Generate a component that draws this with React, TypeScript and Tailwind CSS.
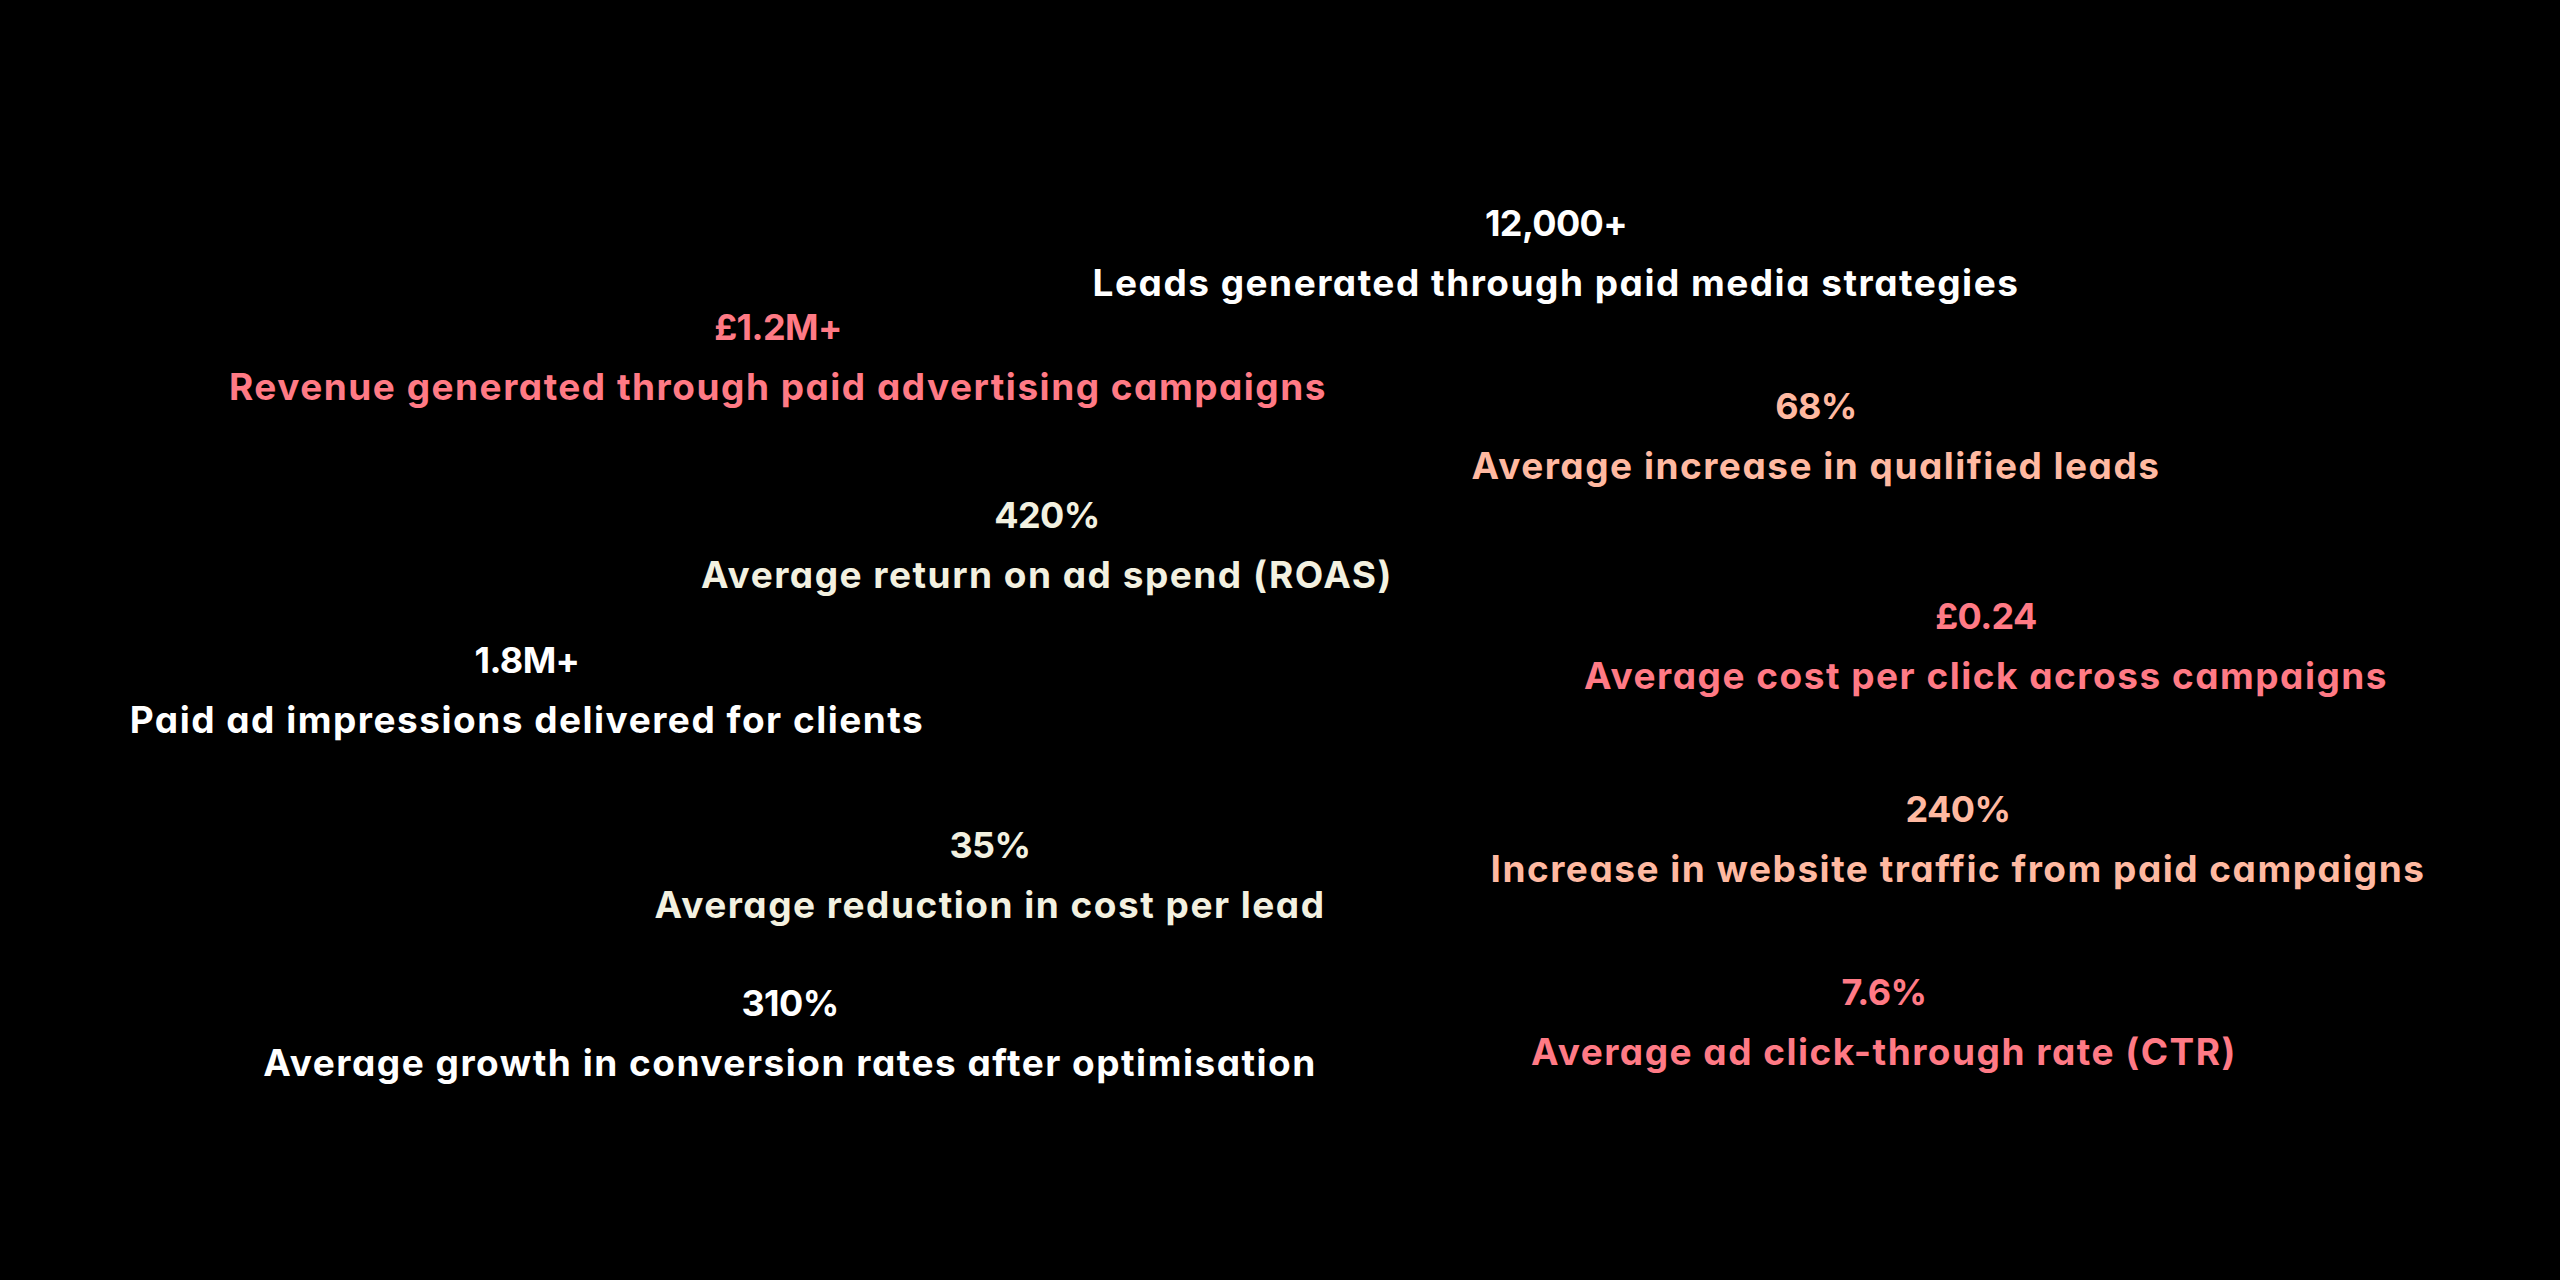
import React from "react";

type Stat = {
  value: string;
  label: string;
  pos: string;
  color: string;
};

const stats: Stat[] = [
  { value: "12,000+", label: "Leads generated through paid media strategies", pos: "left-[1556px] top-[194px]", color: "text-white" },
  { value: "£1.2M+", label: "Revenue generated through paid advertising campaigns", pos: "left-[778px] top-[298px]", color: "text-[#ff7a85]" },
  { value: "68%", label: "Average increase in qualified leads", pos: "left-[1816px] top-[377px]", color: "text-[#ffb9a1]" },
  { value: "420%", label: "Average return on ad spend (ROAS)", pos: "left-[1047px] top-[486px]", color: "text-[#f3f1e0]" },
  { value: "£0.24", label: "Average cost per click across campaigns", pos: "left-[1986px] top-[587px]", color: "text-[#ff7a85]" },
  { value: "1.8M+", label: "Paid ad impressions delivered for clients", pos: "left-[527px] top-[631px]", color: "text-white" },
  { value: "240%", label: "Increase in website traffic from paid campaigns", pos: "left-[1958px] top-[780px]", color: "text-[#ffb9a1]" },
  { value: "35%", label: "Average reduction in cost per lead", pos: "left-[990px] top-[816px]", color: "text-[#f3f1e0]" },
  { value: "310%", label: "Average growth in conversion rates after optimisation", pos: "left-[790px] top-[974px]", color: "text-white" },
  { value: "7.6%", label: "Average ad click-through rate (CTR)", pos: "left-[1884px] top-[963px]", color: "text-[#ff7a85]" },
];

export default function App() {
  return (
    <div className="relative w-[2560px] h-[1280px] bg-black overflow-hidden font-['Inter',sans-serif] [font-feature-settings:'cv11']">
      {stats.map((s) => (
        <div
          key={s.value}
          className={`absolute ${s.pos} -translate-x-1/2 flex flex-col items-center whitespace-nowrap font-bold leading-[59px] ${s.color}`}
        >
          <span className="text-[36px] tracking-[-0.6px]">{s.value}</span>
          <span className="text-[37px] tracking-[1.5px]">{s.label}</span>
        </div>
      ))}
    </div>
  );
}
